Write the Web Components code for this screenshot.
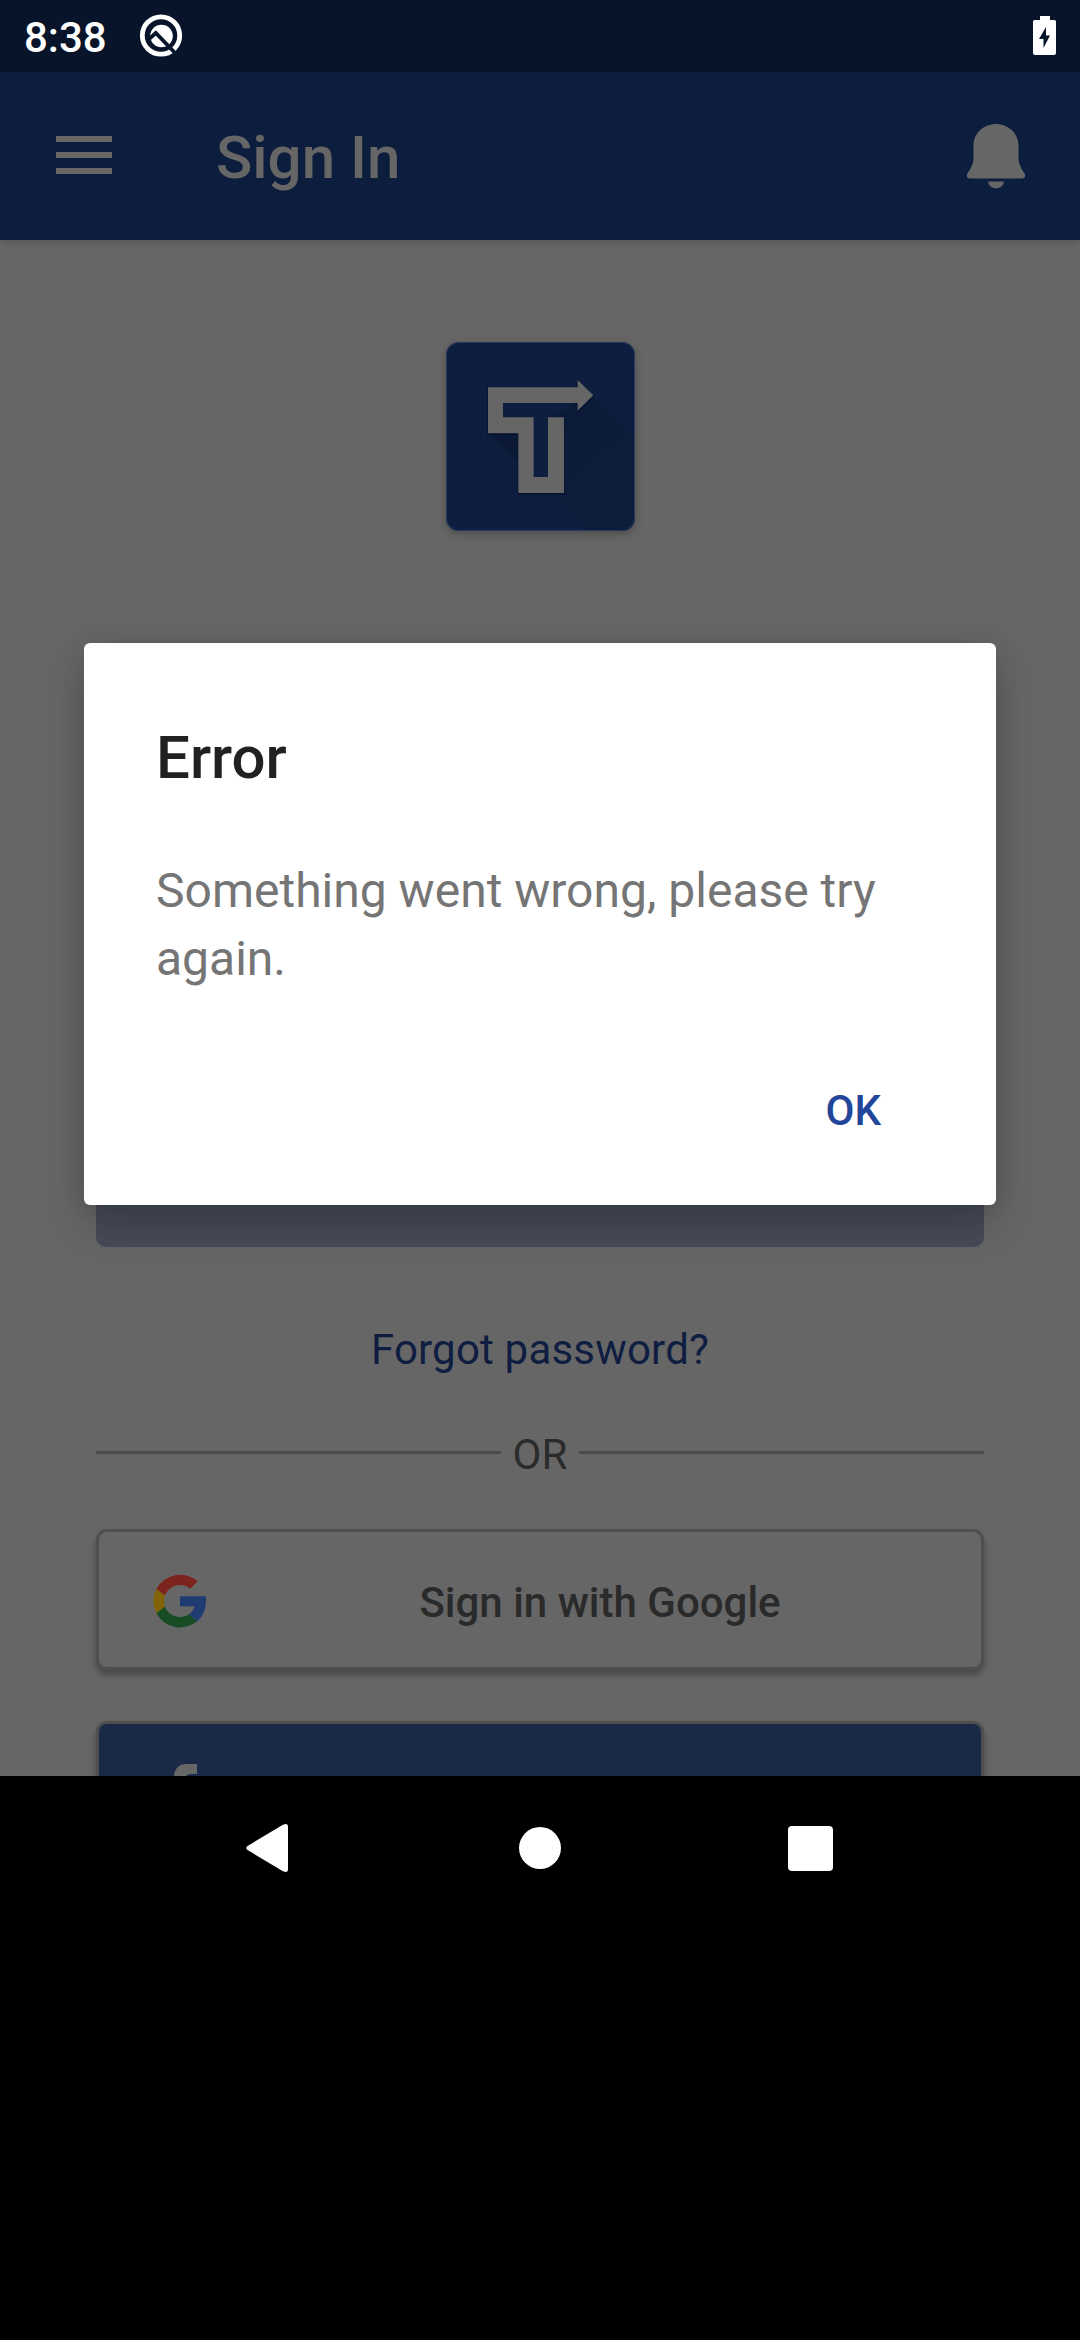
<!DOCTYPE html>
<html lang="en">
<head>
<meta charset="utf-8">
<title>Sign In</title>
<style>
html,body{margin:0;padding:0;background:#000}
body{width:1080px;height:2340px;overflow:hidden;font-family:Roboto,"Liberation Sans",sans-serif}
</style>
</head>
<body>
<phone-screen></phone-screen>
<script>
function define(name, html) {
  const template = document.createElement('template');
  template.innerHTML = html;
  customElements.define(name, class extends HTMLElement {
    constructor() {
      super();
      this.attachShadow({ mode: 'open' }).append(template.content.cloneNode(true));
    }
  });
}

define('status-bar', `
<style>
:host{display:flex;box-sizing:border-box;height:72px;padding:0 24px 0 24px;background:#08142a;align-items:flex-start;flex:none}
.time{font-size:42px;font-weight:500;line-height:50px;margin-top:13px;color:#fff;width:115px;white-space:nowrap}
.q{margin:13px 0 0 0;display:block}
.bat{display:block;margin:16px 0 0 auto}
</style>
<div class="time"><slot></slot></div>
<svg class="q" width="44" height="46" viewBox="0 0 44 46">
  <circle cx="22" cy="22.500" r="18.700" fill="none" stroke="#fff" stroke-width="4.800"/>
  <circle cx="22.500" cy="23" r="11.300" fill="#fff"/>
  <path d="M10 26.200L16.800 20L38.500 42.500" fill="none" stroke="#08142a" stroke-width="3.800"/>
</svg>
<svg class="bat" width="23" height="39" viewBox="0 0 23 39">
  <path d="M7 0H17V4H21.500Q23 4 23 5.500V37Q23 39 21 39H2Q0 39 0 37V5.500Q0 4 1.500 4H7Z" fill="#fff"/>
  <path d="M13 11V19.500H17L10.500 32V23H6Z" fill="#08142a"/>
</svg>`);

define('app-bar', `
<style>
:host{display:flex;box-sizing:border-box;height:168px;padding:0 54px 0 56px;background:#0d1d3e;align-items:flex-start;flex:none;box-shadow:0 1px 9px rgba(0,0,0,.2);z-index:1;clip-path:inset(0 0 -20px 0)}
.menu{display:flex;flex-direction:column;gap:10px;width:56px;margin-top:64px}
.menu i{height:6px;background:#666663}
.title{font-size:60px;font-weight:500;line-height:70px;margin:51px 0 0 104px;color:#666;white-space:nowrap}
svg{display:block;margin:51px 0 0 auto}
</style>
<div class="menu"><i></i><i></i><i></i></div>
<div class="title"><slot></slot></div>
<svg width="60" height="66" viewBox="0 0 60 66" fill="#666">
  <path d="M30 1C42 1 52.500 10 52.500 22.500V35C52.500 41 55.500 46 58.600 50.500C60 53 58.500 55.500 56 55.500H4C1.500 55.500 0 53 1.400 50.500C4.500 46 7.500 41 7.500 35V22.500C7.500 10 18 1 30 1Z"/>
  <path d="M22 58.500H38C37.500 62.500 34 65.300 30 65.300S22.500 62.500 22 58.500Z"/>
</svg>`);

define('app-logo', `
<style>
:host{display:block;width:189px;height:189px;border-radius:13px;background:#0d1e3f;box-shadow:0 3px 8px rgba(0,0,0,.25);overflow:hidden;flex:none}
svg{display:block}
</style>
<svg width="189" height="189" viewBox="78 66 567 567">
  <defs><linearGradient id="g" x1="0" y1="0" x2="1" y2="1"><stop offset="0" stop-color="#0a1835"/><stop offset=".6" stop-color="#0d1c3a"/><stop offset="1" stop-color="#0d1d3c"/></linearGradient></defs>
  <path d="M204 340L497 633H605Q645 633 645 593V353L519 227Z" fill="url(#g)"/>
  <path d="M204 202H473V180L520 226L473 272V249H249V292H341V471H384V292H432V519H295V340H204Z" fill="#030b22" stroke="#071330" stroke-width="5" transform="translate(0 3)"/>
  <path d="M249 249H473L384 292V471H341V292H249Z" fill="#0d1e3f"/>
  <path d="M204 202H473V180L520 226L473 272V249H249V292H341V471H384V292H432V519H295V340H204Z" fill="#666"/>
  <rect x="79.500" y="67.500" width="564" height="564" rx="38" fill="none" stroke="#26395e" stroke-width="3"/>
</svg>`);

define('or-divider', `
<style>
:host{display:flex;width:888px;height:50px;align-items:flex-start;flex:none}
i{flex:1;height:3px;margin-top:21px;background:#4d4d4d}
span{font-size:42px;line-height:50px;padding:0 12px;color:#2b2b2b}
</style>
<i></i><span><slot></slot></span><i></i>`);

define('social-button', `
<style>
:host{display:flex;box-sizing:border-box;width:888px;height:141px;border:3px solid #4f4f4f;border-radius:11px;background:var(--fill,#666);box-shadow:0 5px 6px rgba(0,0,0,.3);flex:none;align-items:flex-start}
.icon{width:120px;height:100%;flex:none}
.label{flex:1;text-align:center;font-size:42px;font-weight:500;line-height:50px;margin-top:46px;color:#2a2a2a}
</style>
<div class="icon"><slot name="icon"></slot></div>
<div class="label"><slot></slot></div>`);

define('sign-in-page', `
<style>
:host{display:flex;flex-direction:column;align-items:center;height:1536px;background:#666;overflow:hidden;flex:none}
app-logo{margin-top:102px;margin-left:1px}
.submit{width:888px;height:132px;margin-top:584px;border-radius:10px;background:#464b57;flex:none}
.forgot{font-size:42px;line-height:50px;margin-top:78px;color:#0f1d41;letter-spacing:.2px;flex:none}
or-divider{margin-top:55px}
.google{margin-top:49px}
.facebook{margin-top:51px;--fill:#1a2947}
svg{display:block}
.g{margin:42px 0 0 54px}
.f{margin:40px 0 0 50px}
</style>
<app-logo></app-logo>
<div class="submit"></div>
<div class="forgot">Forgot password?</div>
<or-divider>OR</or-divider>
<social-button class="google">
  <svg slot="icon" class="g" width="53" height="54" viewBox="0 0 53 54">
    <path d="M44.700 7.200A27 27 0 0 0 3.400 15L11.900 21.500A16 16 0 0 1 37.300 14.700Z" fill="#7b231c"/>
    <path d="M3.400 15A27 27 0 0 0 3.400 39.200L11.900 32.500A17 17 0 0 1 11.900 21.500Z" fill="#836308"/>
    <path d="M3.400 39.200A27 27 0 0 0 44.300 47.300L36 40.300A16 16 0 0 1 11.900 32.500Z" fill="#174c25"/>
    <path d="M27 22.300H52.700C54 32 51 41.500 44.300 47.300L36 40.300C39 38 41 35.200 41.500 32.300H27Z" fill="#1e3c72"/>
  </svg>
  Sign in with Google
</social-button>
<social-button class="facebook">
  <svg slot="icon" class="f" width="54" height="54" viewBox="0 0 54 54">
    <path d="M48 0V10H42C38 10 37 12 37 15V21H48L46.500 32H37V54H26V32H17V21H25V13C25 5 30 0 37 0Z" fill="#666"/>
  </svg>
</social-button>`);

define('alert-dialog', `
<style>
:host{display:flex;flex-direction:column;box-sizing:border-box;width:912px;height:562px;padding:80px 72px 0;background:#fff;border-radius:6px;box-shadow:0 20px 44px rgba(0,0,0,.2),0 0 26px rgba(0,0,0,.08)}
.title{font-size:60px;font-weight:500;line-height:70px;color:#212121}
.body{font-size:48px;line-height:68px;margin-top:64px;color:#757575}
.action{font-size:42px;font-weight:500;line-height:50px;margin-top:93px;padding-right:43px;text-align:right;color:#21469a}
</style>
<div class="title"><slot name="title"></slot></div>
<div class="body"><slot></slot></div>
<div class="action"><slot name="action"></slot></div>`);

define('nav-bar', `
<style>
:host{display:flex;box-sizing:border-box;height:144px;padding-left:246px;background:#000;align-items:center;flex:none}
svg{display:block}
svg:nth-of-type(2){margin:0 226.500px 0 231px}
</style>
<svg width="42" height="48" viewBox="0 0 42 48"><path d="M1.500 22L37 .8Q42 -1.500 42 3V45Q42 49.500 37 47.200L1.500 26Q-1 24 1.500 22Z" fill="#fff"/></svg>
<svg width="42" height="42" viewBox="0 0 42 42"><circle cx="21" cy="21" r="21" fill="#fff"/></svg>
<svg width="45" height="45" viewBox="0 0 45 45"><rect width="45" height="45" rx="4" fill="#fff"/></svg>`);

define('phone-screen', `
<style>
:host{display:flex;flex-direction:column;position:relative;width:1080px;height:2340px;background:#000;overflow:hidden}
alert-dialog{position:absolute;left:84px;top:643px;z-index:2}
</style>
<status-bar>8:38</status-bar>
<app-bar>Sign In</app-bar>
<sign-in-page></sign-in-page>
<nav-bar></nav-bar>
<alert-dialog>
  <span slot="title">Error</span>
  Something went wrong, please try again.
  <span slot="action">OK</span>
</alert-dialog>`);
</script>
</body>
</html>
